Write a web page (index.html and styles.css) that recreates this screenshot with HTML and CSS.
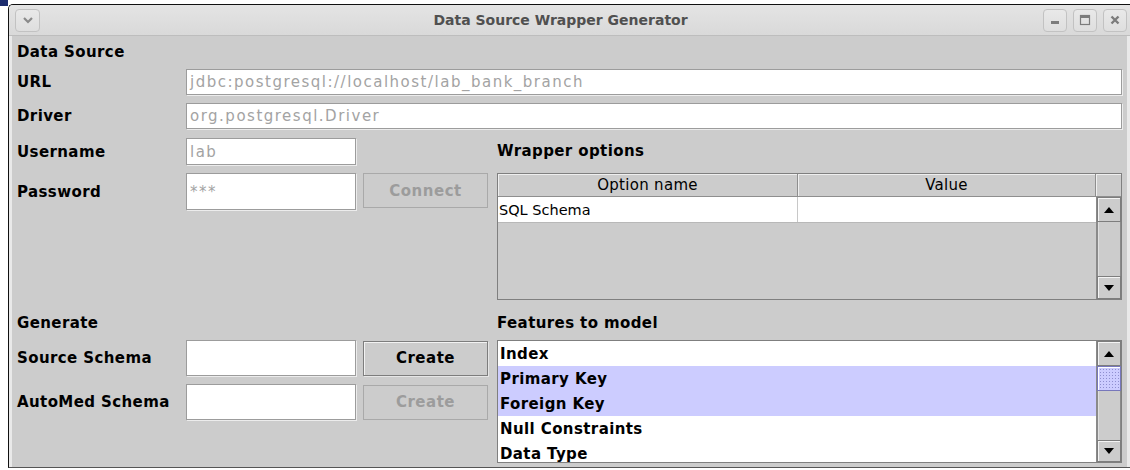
FILE: index.html
```html
<!DOCTYPE html>
<html>
<head>
<meta charset="utf-8">
<title>Data Source Wrapper Generator</title>
<link rel="stylesheet" href="styles.css">
</head>
<body>
<div class="desk-corner"></div>
<div class="window">
  <div class="titlebar">
    <div class="tb-btn menu-btn">
      <svg width="12" height="8" viewBox="0 0 12 8"><path d="M2 2 L6 6 L10 2" fill="none" stroke="#8a8a8a" stroke-width="2.2"/></svg>
    </div>
    <div class="title">Data Source Wrapper Generator</div>
    <div class="tb-group">
      <div class="tb-btn">
        <svg width="12" height="12" viewBox="0 0 12 12"><rect x="2" y="7" width="8" height="3" fill="#7c7c7c"/></svg>
      </div>
      <div class="tb-btn">
        <svg width="12" height="12" viewBox="0 0 12 12"><rect x="1.5" y="1.5" width="9" height="9" fill="none" stroke="#7c7c7c" stroke-width="1.2"/><rect x="1" y="1" width="10" height="3" fill="#7c7c7c"/></svg>
      </div>
      <div class="tb-btn">
        <svg width="12" height="12" viewBox="0 0 12 12"><path d="M2.5 2.5 L9.5 9.5 M9.5 2.5 L2.5 9.5" stroke="#7c7c7c" stroke-width="2.4"/></svg>
      </div>
    </div>
  </div>

  <div class="content">
    <div class="heading">Data Source</div>
    <div class="row full">
      <div class="label">URL</div>
      <div class="field disabled grow">jdbc:postgresql://localhost/lab_bank_branch</div>
    </div>
    <div class="row full r-driver">
      <div class="label">Driver</div>
      <div class="field disabled grow">org.postgresql.Driver</div>
    </div>

    <div class="split split-top">
      <div class="col-left">
        <div class="row r-user">
          <div class="label">Username</div>
          <div class="field disabled small">lab</div>
        </div>
        <div class="row r-pass">
          <div class="label">Password</div>
          <div class="field disabled small tall">***</div>
          <div class="button off">Connect</div>
        </div>
      </div>
      <div class="col-right">
        <div class="heading h-wrap">Wrapper options</div>
        <div class="table">
          <div class="t-main">
            <div class="t-head">
              <div class="th th-name">Option name</div>
              <div class="th th-value">Value</div>
            </div>
            <div class="t-body">
              <div class="tr">
                <div class="td td-name">SQL Schema</div>
                <div class="td td-value"></div>
              </div>
            </div>
          </div>
          <div class="t-side">
            <div class="th-corner"></div>
            <div class="vscroll">
              <div class="arrow up"></div>
              <div class="track"></div>
              <div class="arrow down"></div>
            </div>
          </div>
        </div>
      </div>
    </div>

    <div class="split split-bottom">
      <div class="col-left">
        <div class="heading">Generate</div>
        <div class="row r-gen">
          <div class="label">Source Schema</div>
          <div class="field small tall"></div>
          <div class="button">Create</div>
        </div>
        <div class="row r-gen2">
          <div class="label">AutoMed Schema</div>
          <div class="field small tall"></div>
          <div class="button off">Create</div>
        </div>
      </div>
      <div class="col-right">
        <div class="heading">Features to model</div>
        <div class="list">
          <div class="items">
            <div class="item">Index</div>
            <div class="item selected">Primary Key</div>
            <div class="item selected">Foreign Key</div>
            <div class="item">Null Constraints</div>
            <div class="item">Data Type</div>
          </div>
          <div class="vscroll list-scroll">
            <div class="arrow up"></div>
            <div class="thumb"></div>
            <div class="track"></div>
            <div class="arrow down"></div>
          </div>
        </div>
      </div>
    </div>
  </div>
</div>
</body>
</html>
```

FILE: styles.css
```css
html, body {
  margin: 0;
  padding: 0;
  background: #ffffff;
  width: 1130px;
  height: 470px;
  overflow: hidden;
}

body {
  position: relative;
  font-family: "DejaVu Sans", sans-serif;
  font-size: 15px;
  color: #000;
}

/* sliver of desktop peeking past the rounded window corner */
.desk-corner {
  position: absolute;
  left: 0;
  top: 0;
  width: 8px;
  height: 6px;
  background: #1d2d6e;
}

.window {
  position: relative;
  margin: 4px 0 0 8px;
  width: 1121px;
  height: 462px;
  border-top: 1px solid #111;
  border-left: 1px solid #111;
  border-bottom: 1px solid #555;
  border-top-left-radius: 5px;
  display: flex;
  flex-direction: column;
  background: #e9e9e9;
  overflow: hidden;
}

/* ---------- title bar ---------- */
.titlebar {
  height: 30px;
  flex: none;
  display: flex;
  align-items: center;
  padding: 0 3px 0 6px;
  background: linear-gradient(#e4e4e4, #d9d9d9);
  border-bottom: 1px solid #bdbdbd;
}

.title {
  flex: 1;
  text-align: center;
  font-weight: bold;
  font-size: 14px;
  color: #505050;
  padding-left: 38px;
}

.tb-group {
  display: flex;
  gap: 6px;
}

.tb-btn {
  width: 22px;
  height: 21px;
  border: 1px solid #c2c2c2;
  border-radius: 4px;
  background: linear-gradient(#e9e9e9, #dedede);
  display: flex;
  align-items: center;
  justify-content: center;
}

.menu-btn {
  width: 23px;
}

/* ---------- content ---------- */
.content {
  flex: 1;
  background: #cccccc;
  margin: 0 3px;
  padding: 6px 5px 0 5px;
  display: flex;
  flex-direction: column;
}

.heading {
  height: 20px;
  line-height: 20px;
  font-weight: bold;
  letter-spacing: 0.4px;
}

.row {
  display: flex;
  align-items: center;
}

.label {
  width: 169px;
  flex: none;
  font-weight: bold;
  letter-spacing: 0.4px;
  white-space: nowrap;
}

.full {
  height: 26px;
  margin-top: 7px;
}

.r-driver {
  margin-top: 8px;
}

.field {
  box-sizing: border-box;
  height: 100%;
  background: #fff;
  border: 1px solid #9c9c9c;
  box-shadow: 1px 1px 0 #ececec;
  padding: 0 3px;
  display: flex;
  align-items: center;
  letter-spacing: 1.5px;
  white-space: nowrap;
  overflow: hidden;
}

.field.disabled {
  color: #a3a3a3;
}

.grow {
  flex: 1;
}

.small {
  width: 170px;
  flex: none;
}

/* two-column bands */
.split {
  display: flex;
  gap: 9px;
}

.col-left {
  width: 471px;
  flex: none;
  display: flex;
  flex-direction: column;
}

.col-right {
  flex: 1;
  display: flex;
  flex-direction: column;
}

.split-top {
  margin-top: 9px;
}

.r-user {
  height: 27px;
}

.r-pass {
  height: 37px;
  margin-top: 8px;
}

.r-pass .button {
  align-self: flex-start;
}

.h-wrap {
  height: 27px;
  line-height: 27px;
}

.button {
  box-sizing: border-box;
  width: 126px;
  height: 35px;
  margin-left: 7px;
  border: 1px solid #7d7d7d;
  box-shadow: inset 1px 1px 0 #f2f2f2, 1px 1px 0 #e6e6e6;
  display: flex;
  align-items: center;
  justify-content: center;
  font-weight: bold;
  letter-spacing: 0.5px;
  color: #000;
}

.button.off {
  border-color: #a9a9a9;
  box-shadow: none;
  color: #9c9c9c;
}

/* ---------- options table ---------- */
.table {
  margin-top: 8px;
  height: 127px;
  box-sizing: border-box;
  border: 1px solid #7f7f7f;
  display: flex;
}

.t-main {
  flex: 1;
  display: flex;
  flex-direction: column;
}

.t-head {
  height: 23px;
  display: flex;
  flex: none;
}

.th {
  box-sizing: border-box;
  height: 23px;
  border-right: 1px solid #8e8e8e;
  border-bottom: 1px solid #8e8e8e;
  box-shadow: inset 1px 1px 0 #efefef;
  display: flex;
  align-items: center;
  justify-content: center;
  font-size: 15px;
  letter-spacing: 0.3px;
}

.th-name {
  width: 300px;
}

.th-value {
  flex: 1;
}

.t-body {
  flex: 1;
}

.tr {
  height: 25px;
  display: flex;
  background: #fff;
  border-bottom: 1px solid #b8b8b8;
}

.td {
  box-sizing: border-box;
  height: 25px;
  display: flex;
  align-items: center;
  font-size: 14.5px;
}

.td-name {
  width: 300px;
  padding-left: 1px;
  border-right: 1px solid #c8c8c8;
}

.td-value {
  flex: 1;
}

.t-side {
  width: 25px;
  flex: none;
  display: flex;
  flex-direction: column;
}

.th-corner {
  box-sizing: border-box;
  height: 23px;
  flex: none;
  border-bottom: 1px solid #8e8e8e;
  box-shadow: inset 1px 1px 0 #efefef;
}

/* ---------- scroll bars ---------- */
.vscroll {
  flex: 1;
  display: flex;
  flex-direction: column;
  border-left: 1px solid #8a8a8a;
  background: #cccccc;
}

.list-scroll {
  flex: none;
  width: 24px;
}

.arrow {
  box-sizing: border-box;
  height: 25px;
  flex: none;
  border: 1px solid #7d7d7d;
  box-shadow: inset 1px 1px 0 #f4f4f4;
  display: flex;
  align-items: center;
  justify-content: center;
}

.arrow::before {
  content: "";
  width: 0;
  height: 0;
  border-left: 5px solid transparent;
  border-right: 5px solid transparent;
}

.arrow.up::before {
  border-bottom: 6px solid #000;
}

.arrow.down::before {
  border-top: 6px solid #000;
}

.table .arrow.down {
  height: 23px;
}

.track {
  flex: 1;
  border: 1px solid #8a8a8a;
  border-top: none;
  border-bottom: none;
  box-shadow: inset 1px 0 0 #e0e0e0;
}

.thumb {
  box-sizing: border-box;
  height: 25px;
  flex: none;
  border: 1px solid #7777bb;
  background-color: #ccccff;
  background-image: radial-gradient(circle, #8f8fd0 0.8px, transparent 1px);
  background-size: 3px 3px;
  background-position: 1px 1px;
  box-shadow: inset 1px 1px 0 #ffffff;
}

/* ---------- features list ---------- */
.list {
  margin-top: 7px;
  height: 123px;
  box-sizing: border-box;
  border: 1px solid #7f7f7f;
  display: flex;
  overflow: hidden;
}

.items {
  flex: 1;
  background: #fff;
  overflow: hidden;
}

.item {
  box-sizing: border-box;
  height: 25px;
  padding: 2px 0 0 2px;
  line-height: 23px;
  font-weight: bold;
  letter-spacing: 0.4px;
  white-space: nowrap;
}

.item.selected {
  background: #ccccff;
}

.list-scroll .arrow.down {
  height: 22px;
}

.split-bottom {
  margin-top: 13px;
}

.r-gen {
  height: 36px;
  margin-top: 7px;
}

.r-gen2 {
  height: 36px;
  margin-top: 8px;
}
```
